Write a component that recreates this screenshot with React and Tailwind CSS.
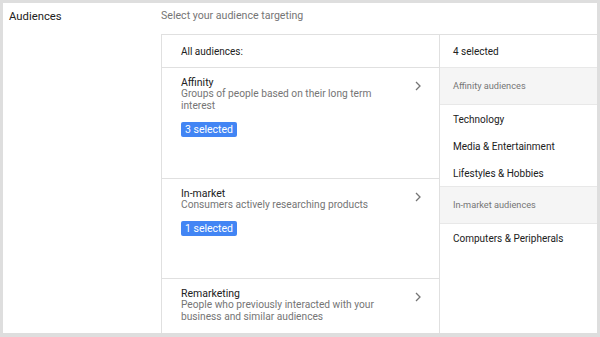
import React from "react";

const Chevron = () => (
  <svg width="6" height="10" viewBox="0 0 6 10" className="shrink-0">
    <path d="M1 1 L5 5 L1 9" fill="none" stroke="#757575" strokeWidth="1.3" />
  </svg>
);

const Row = ({ title, desc, badge, h }) => (
  <div className={`flex border-b border-[#e0e0e0] pl-[19px] pr-[18px] pt-[8px] ${h}`}>
    <div className="flex-1">
      <div className="text-[10.5px] leading-[13px] text-[#212121]">{title}</div>
      <div className="text-[10.2px] leading-[12px] text-[#757575] w-[198px] mt-[-1px]">{desc}</div>
      {badge && (
        <div className="mt-[10px] inline-flex h-[15px] items-center rounded-[2px] bg-[#4285f4] px-[4px] text-[10.5px] text-white">
          {badge}
        </div>
      )}
    </div>
    <div className="pt-[5px]">
      <Chevron />
    </div>
  </div>
);

const Header = ({ children }) => (
  <div className="flex h-[38px] items-center border-y border-[#e8e8e8] bg-[#f5f5f5] pl-[13px] text-[9.2px] text-[#757575]">
    {children}
  </div>
);

const Item = ({ children }) => (
  <div className="flex h-[27px] items-center pl-[13px] text-[10px] text-[#212121]">{children}</div>
);

export default function App() {
  return (
    <div
      className="w-[600px] h-[337px] overflow-hidden bg-[#dedede] pt-[3px] pl-[3px] pr-[3px] pb-[4px]"
      style={{ fontFamily: "Roboto, 'Liberation Sans', sans-serif" }}
    >
      <div className="flex h-full bg-white">
        <div className="w-[158px] shrink-0 pl-[6px] pt-[6px] text-[11.3px] text-[#212121]">Audiences</div>
        <div className="flex flex-1 flex-col min-w-0">
          <div className="h-[31px] shrink-0 pt-[5px] text-[10.6px] text-[#757575]">Select your audience targeting</div>
          <div className="flex flex-1 border-l border-t border-[#e0e0e0] overflow-hidden">
            <div className="w-[278px] shrink-0 border-r border-[#e0e0e0]">
              <div className="flex h-[33px] items-center border-b border-[#e0e0e0] pl-[19px] text-[10px] text-[#212121]">
                All audiences:
              </div>
              <Row
                h="h-[111px]"
                title="Affinity"
                desc="Groups of people based on their long term interest"
                badge="3 selected"
              />
              <Row
                h="h-[100px]"
                title="In-market"
                desc="Consumers actively researching products"
                badge="1 selected"
              />
              <Row
                h="h-[60px]"
                title="Remarketing"
                desc="People who previously interacted with your business and similar audiences"
              />
            </div>
            <div className="flex-1">
              <div className="flex h-[32px] items-center pl-[13px] text-[10px] text-[#212121]">4 selected</div>
              <Header>Affinity audiences</Header>
              <div className="pt-[1px]">
                <Item>Technology</Item>
                <Item>Media &amp; Entertainment</Item>
                <Item>Lifestyles &amp; Hobbies</Item>
              </div>
              <div className="mt-[-1px]">
                <Header>In-market audiences</Header>
              </div>
              <div className="pt-[1px]">
                <Item>Computers &amp; Peripherals</Item>
              </div>
            </div>
          </div>
        </div>
      </div>
    </div>
  );
}
